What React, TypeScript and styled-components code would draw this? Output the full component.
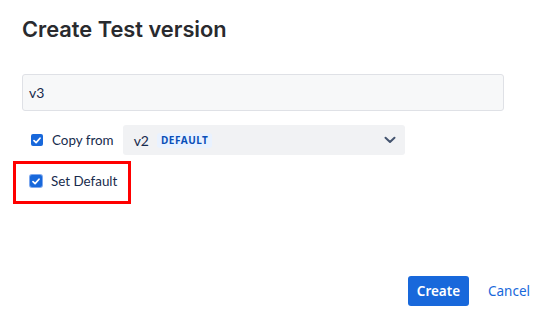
import React from "react";
import styled, { createGlobalStyle } from "styled-components";

const Global = createGlobalStyle`
  html, body { margin: 0; padding: 0; background: #ffffff; }
  body { font-family: Lato, "Noto Sans", sans-serif; }
`;

const Dialog = styled.div`
  width: 559px;
  height: 322px;
  box-sizing: border-box;
  padding: 16px 18px 0 22px;
  display: flex;
  flex-direction: column;
  color: #172b4d;
`;

const Title = styled.h1`
  margin: 0;
  font-family: Inter, "Liberation Sans", sans-serif;
  font-size: 21.8px;
  line-height: 26px;
  font-weight: 600;
  color: #292a2e;
`;

const TextInput = styled.div`
  margin-top: 32px;
  width: 482px;
  height: 37px;
  box-sizing: border-box;
  border: 1px solid #dfe1e6;
  border-radius: 3px;
  background: #f7f8f9;
  display: flex;
  align-items: center;
  padding-left: 6px;
  font-size: 14px;
  color: #172b4d;
`;

const Row = styled.div<{ $mt: number }>`
  margin-top: ${(p) => p.$mt}px;
  display: flex;
  align-items: center;
  padding-left: 9px;
`;

const Highlight = styled.div`
  margin-top: 6px;
  margin-left: -9px;
  width: 118px;
  height: 43px;
  box-sizing: border-box;
  border: 3.5px solid #ff0000;
  display: flex;
  align-items: center;
  padding: 0 0 3px 14px;
`;

const Box = styled.span<{ $ring?: boolean }>`
  width: 12px;
  height: 12px;
  box-sizing: border-box;
  border-radius: 2px;
  background: #1868db;
  display: inline-flex;
  align-items: center;
  justify-content: center;
  box-shadow: ${(p) => (p.$ring ? "0 0 0 1px #7ea9ef" : "none")};
  flex-shrink: 0;
`;

const Label = styled.span`
  margin-left: 9px;
  font-size: 13.4px;
  line-height: 18px;
  color: #172b4d;
  white-space: nowrap;
`;

const Select = styled.div`
  margin-left: 9px;
  width: 282px;
  height: 30px;
  box-sizing: border-box;
  background: #f1f2f4;
  border-radius: 3px;
  display: flex;
  align-items: center;
  padding: 0 9px 0 11px;
`;

const Value = styled.span`
  font-size: 14px;
  color: #172b4d;
`;

const Badge = styled.span`
  margin-left: 8px;
  height: 15px;
  padding: 0 4px;
  border-radius: 3px;
  background: #e9f2ff;
  color: #0a4fb8;
  font-family: "Noto Sans", sans-serif;
  font-size: 10px;
  font-weight: 700;
  letter-spacing: 0.5px;
  line-height: 15px;
`;

const Spacer = styled.span`
  flex: 1;
`;

const Footer = styled.div`
  margin-top: auto;
  margin-bottom: 16px;
  display: flex;
  justify-content: flex-end;
  align-items: center;
  gap: 8px;
`;

const Primary = styled.button`
  height: 30px;
  width: 61px;
  border: none;
  border-radius: 3px;
  background: #1868db;
  color: #ffffff;
  font-family: "Noto Sans", sans-serif;
  font-size: 13.5px;
  font-weight: 600;
  padding: 0;
`;

const Subtle = styled.button`
  height: 30px;
  border: none;
  background: transparent;
  color: #1868db;
  font-family: "Noto Sans", sans-serif;
  font-size: 13.5px;
  padding: 0 11px;
`;

const Check = () => (
  <svg width="8" height="7" viewBox="0 0 8 7" fill="none">
    <path d="M1 3.6 L3.1 5.6 L7 1.2" stroke="#fff" strokeWidth="1.7" strokeLinecap="round" strokeLinejoin="round" />
  </svg>
);

const Chevron = () => (
  <svg width="12" height="8" viewBox="0 0 12 8" fill="none">
    <path d="M1.5 1.8 L6 6 L10.5 1.8" stroke="#44546f" strokeWidth="2" strokeLinecap="round" strokeLinejoin="round" />
  </svg>
);

export default function App() {
  return (
    <>
      <Global />
      <Dialog>
        <Title>Create Test version</Title>
        <TextInput>v3</TextInput>
        <Row $mt={14}>
          <Box>
            <Check />
          </Box>
          <Label>Copy from</Label>
          <Select>
            <Value>v2</Value>
            <Badge>DEFAULT</Badge>
            <Spacer />
            <Chevron />
          </Select>
        </Row>
        <Highlight>
          <Box $ring>
            <Check />
          </Box>
          <Label>Set Default</Label>
        </Highlight>
        <Footer>
          <Primary>Create</Primary>
          <Subtle>Cancel</Subtle>
        </Footer>
      </Dialog>
    </>
  );
}
